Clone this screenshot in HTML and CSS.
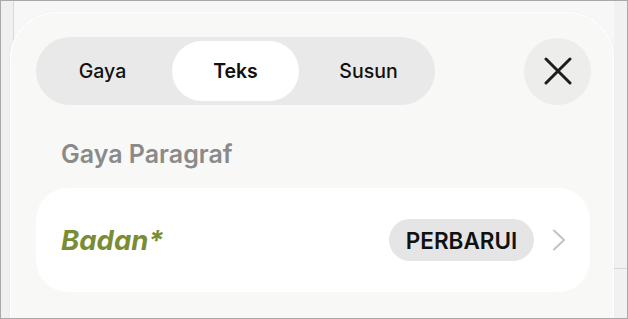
FILE: index.html
```html
<!DOCTYPE html>
<html lang="id">
<head>
<meta charset="utf-8">
<title>Format</title>
<link rel="stylesheet" href="styles.css">
</head>
<body>
<div class="frame">
  <div class="sheet">
    <div class="header">
      <div class="segmented">
        <div class="seg"><span class="seg-label">Gaya</span></div>
        <div class="seg"><span class="seg-label active">Teks</span></div>
        <div class="seg"><span class="seg-label">Susun</span></div>
      </div>
      <button class="close" aria-label="Tutup">
        <svg width="28" height="28" viewBox="0 0 28 28"><path d="M2 2 L26 26 M26 2 L2 26" stroke="#1d1d1d" stroke-width="3" stroke-linecap="round" fill="none"/></svg>
      </button>
    </div>
    <div class="section-title">Gaya Paragraf</div>
    <div class="card">
      <span class="style-name">Badan*</span>
      <div class="card-actions">
        <span class="update">PERBARUI</span>
        <svg class="chev" width="14" height="22" viewBox="0 0 14 22"><path d="M2 1.5 L12 11 L2 20.5" stroke="#c3c3c3" stroke-width="2" stroke-linecap="round" stroke-linejoin="round" fill="none"/></svg>
      </div>
    </div>
  </div>
</div>
</body>
</html>
```
FILE: styles.css
```css
html, body {
  margin: 0;
  padding: 0;
}
body {
  font-family: Inter, "Noto Sans", "Liberation Sans", sans-serif;
  background: #ffffff;
}
.frame {
  border: 1px solid #a9a9a9;
  overflow: hidden;
  padding: 11px 0 0 9px;
  box-sizing: content-box;
  width: 617px;
  height: 306px;
  background:
    linear-gradient(#d8d8d8, #d8d8d8) right 0 top 267px / 13px 1px no-repeat,
    linear-gradient(to right, #f0f0f0 0 12px, #dadada 12px 13px, #f7f7f7 13px 613px, #f1f1f1 613px);
}
.sheet {
  width: 602px;
  height: 330px;
  border: 1px solid #ffffff;
  border-bottom: none;
  border-radius: 46px 46px 0 0;
  background: #f8f8f6;
  box-shadow: 0 0 2px rgba(0,0,0,0.05);
}
.header {
  display: flex;
  justify-content: space-between;
  align-items: center;
  padding: 24px 22px 0 25px;
}
.segmented {
  display: grid;
  grid-template-columns: repeat(3, 133px);
  height: 68px;
  border-radius: 34px;
  background: #e9e9e9;
}
.seg {
  display: flex;
  padding: 4px 3px;
}
.seg-label {
  flex: 1;
  display: flex;
  align-items: center;
  justify-content: center;
  font-size: 19.5px;
  font-weight: 500;
  color: #111111;
  border-radius: 31px;
}
.seg-label.active {
  background: #ffffff;
  font-weight: 600;
}
.close {
  width: 67px;
  height: 67px;
  border: none;
  border-radius: 50%;
  background: #ededec;
  display: flex;
  align-items: center;
  justify-content: center;
  padding: 0;
}
.section-title {
  margin: 34px 0 0 50px;
  font-size: 25px;
  font-weight: 600;
  color: #8a8a8a;
  line-height: 30px;
}
.card {
  margin: 19px 23px 0 25px;
  height: 104px;
  background: #ffffff;
  border-radius: 32px;
  display: flex;
  align-items: center;
  justify-content: space-between;
  padding: 0 24px 0 25px;
}
.style-name {
  font-size: 27.5px;
  font-weight: 700;
  font-style: italic;
  color: #7a8d34;
}
.card-actions {
  display: flex;
  align-items: center;
  gap: 18px;
}
.update {
  display: flex;
  align-items: center;
  justify-content: center;
  width: 145px;
  height: 42px;
  border-radius: 21px;
  background: #e5e5e5;
  font-size: 22.5px;
  font-weight: 600;
  color: #111111;
}
.chev {
  display: block;
}
```
